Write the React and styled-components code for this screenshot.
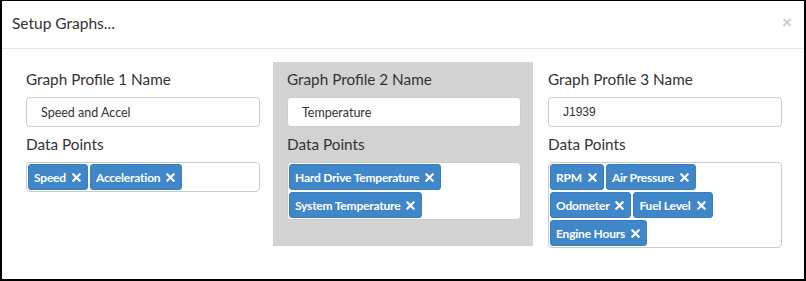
import React from 'react'
import styled, { createGlobalStyle } from 'styled-components'

const GlobalStyle = createGlobalStyle`
  html, body {
    margin: 0;
    padding: 0;
    background: #fff;
  }
  * {
    box-sizing: border-box;
  }
`

const Modal = styled.div`
  width: 806px;
  height: 281px;
  border: 2px solid #000;
  border-top-width: 1px;
  background: #fff;
  font-family: Lato, "Open Sans", sans-serif;
  color: #333;
`

const Header = styled.div`
  height: 48px;
  display: flex;
  align-items: center;
  justify-content: space-between;
  padding: 0 10px 4px 10px;
  border-bottom: 1px solid #e5e5e5;
`

const Title = styled.h4`
  margin: 0;
  font-size: 15.5px;
  font-weight: 400;
  color: #333;
`

const Close = styled.button`
  border: none;
  background: none;
  padding: 0;
  margin-right: 2px;
  font-size: 17px;
  font-weight: 700;
  line-height: 1;
  color: #000;
  opacity: 0.2;
  cursor: pointer;
  font-family: "Liberation Sans", Arial, sans-serif;
`

const Body = styled.div`
  display: grid;
  grid-template-columns: repeat(3, 260px);
  column-gap: 1px;
  align-items: start;
  padding: 13px 0 0 10px;
`

const Column = styled.div`
  min-height: 184px;
  padding: 6px 12px 0 14px;
  background: ${props => (props.active ? '#d3d3d3' : 'transparent')};
`

const Label = styled.div`
  font-size: 15.3px;
  line-height: 22px;
  color: #333;
  margin-bottom: 7px;
`

const NameInput = styled.div`
  height: 30px;
  display: flex;
  align-items: center;
  padding: 0 14px;
  margin-bottom: 6px;
  border: 1px solid #ccc;
  border-radius: 4px;
  background: #fff;
  font-size: ${props => (props.plain ? '12px' : '12.5px')};
  font-family: ${props => (props.plain ? '"Liberation Sans", Arial, sans-serif' : 'Lato, "Open Sans", sans-serif')};
  color: #333;
`

const TagBox = styled.div`
  display: flex;
  flex-wrap: wrap;
  gap: 2px;
  padding: 1px 14px 1px 1px;
  min-height: 30px;
  border: 1px solid #ccc;
  border-radius: 4px;
  background: #fff;
`

const Tag = styled.span`
  height: 26px;
  display: inline-flex;
  align-items: center;
  gap: 6px;
  padding: 0 6px 0 5px;
  border: 1px solid #3a7fbd;
  border-radius: 3px;
  background: #3f87c8;
  color: #fff;
  font-size: 12px;
  font-weight: 700;
  letter-spacing: -0.2px;
  white-space: nowrap;
`

const Remove = styled.svg`
  width: 9px;
  height: 9px;
  flex: none;
`

const Cross = () => (
  <Remove viewBox="0 0 10 10">
    <path d="M1.5 1.5 L8.5 8.5 M8.5 1.5 L1.5 8.5" stroke="#fff" strokeWidth="2.4" strokeLinecap="square" />
  </Remove>
)

const profiles = [
  { name: 'Speed and Accel', points: ['Speed', 'Acceleration'] },
  { name: 'Temperature', points: ['Hard Drive Temperature', 'System Temperature'], active: true },
  { name: 'J1939', points: ['RPM', 'Air Pressure', 'Odometer', 'Fuel Level', 'Engine Hours'], plain: true },
]

const App = () => {
  return (
    <>
      <GlobalStyle />
      <Modal>
        <Header>
          <Title>Setup Graphs...</Title>
          <Close>×</Close>
        </Header>
        <Body>
          {profiles.map((p, i) => (
            <Column key={p.name} active={p.active}>
              <Label>Graph Profile {i + 1} Name</Label>
              <NameInput plain={p.plain}>{p.name}</NameInput>
              <Label>Data Points</Label>
              <TagBox>
                {p.points.map(pt => (
                  <Tag key={pt}>
                    {pt}
                    <Cross />
                  </Tag>
                ))}
              </TagBox>
            </Column>
          ))}
        </Body>
      </Modal>
    </>
  )
}

export default App
